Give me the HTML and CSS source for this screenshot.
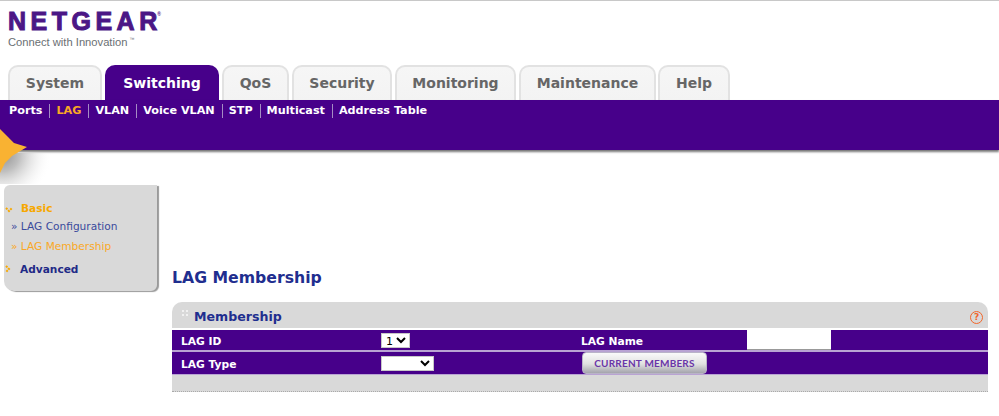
FILE: index.html
```html
<!DOCTYPE html>
<html lang="en">
<head>
<meta charset="utf-8">
<title>LAG Membership</title>
<link rel="stylesheet" href="styles.css">
</head>
<body>
<header class="top">
  <div class="logo">
    <div class="logo-name">NETGEA<span class="logo-last">R</span><span class="logo-reg">®</span></div>
    <div class="logo-tag">Connect with Innovation<sup class="tm">™</sup></div>
  </div>
  <nav class="tabs">
    <a class="tab tab-system">System</a>
    <a class="tab tab-on tab-switching">Switching</a>
    <a class="tab tab-qos">QoS</a>
    <a class="tab tab-security">Security</a>
    <a class="tab tab-monitoring">Monitoring</a>
    <a class="tab tab-maintenance">Maintenance</a>
    <a class="tab tab-help">Help</a>
  </nav>
</header>
<div class="band">
  <nav class="subnav">
    <a>Ports</a><a class="sub-on">LAG</a><a>VLAN</a><a>Voice VLAN</a><a>STP</a><a>Multicast</a><a>Address Table</a>
  </nav>
</div>
<div class="star-wrap">
  <svg class="star" width="60" height="34" viewBox="0 0 60 34">
    <defs>
      <radialGradient id="glow" gradientUnits="userSpaceOnUse" cx="2" cy="4" r="50">
        <stop offset="0" stop-color="#8c8c8c"/>
        <stop offset="0.35" stop-color="#b8b8b8" stop-opacity="0.9"/>
        <stop offset="1" stop-color="#ffffff" stop-opacity="0"/>
      </radialGradient>
      <filter id="soft"><feGaussianBlur stdDeviation="0.6"/></filter>
    </defs>
    <rect x="0" y="3" width="60" height="31" fill="url(#glow)"/>
    <path d="M0 -21 L8 -13 L14 -7 L27 -3 L12 6 L5 13 L0 23 Z" fill="#f9b233" filter="url(#soft)"/>
  </svg>
</div>
<div class="main">
  <aside class="side">
    <div class="side-head side-open"><svg class="chev" width="8" height="6" viewBox="0 0 8 6"><path d="M1 1 L4 4 L7 1" fill="none" stroke="#f7a800" stroke-width="2" stroke-dasharray="2 1"/></svg>Basic</div>
    <a class="side-link">» LAG Configuration</a>
    <a class="side-link side-link-on">» LAG Membership</a>
    <div class="side-head side-closed"><svg class="chev-r" width="6" height="8" viewBox="0 0 6 8"><path d="M1 1 L4 4 L1 7" fill="none" stroke="#f7a800" stroke-width="2" stroke-dasharray="2 1"/></svg>Advanced</div>
  </aside>
  <section class="content">
    <h1 class="title">LAG Membership</h1>
    <div class="panel">
      <div class="panel-head">
        <span class="grip">
          <i></i><i></i><i></i><i></i>
        </span>
        <span class="panel-title">Membership</span>
        <span class="help">?</span>
      </div>
      <div class="row row-first">
        <label class="c1">LAG ID</label>
        <div class="c2"><select class="sel sel-id"><option>1</option></select></div>
        <label class="c3">LAG Name</label>
        <div class="c4"><input class="name-input" type="text"></div>
      </div>
      <div class="row">
        <label class="c1">LAG Type</label>
        <div class="c2"><select class="sel sel-type"><option></option></select></div>
        <div class="c3"><button class="btn" type="button">CURRENT MEMBERS</button></div>
      </div>
      <div class="panel-foot"></div>
    </div>
  </section>
</div>
</body>
</html>
```
FILE: styles.css
```css
* { box-sizing: border-box; }
html, body { margin: 0; padding: 0; background: #fff; overflow: hidden; }
body { font-family: "DejaVu Sans", sans-serif; width: 999px; height: 416px; border-top: 1px solid #c8c8c8; }

.top { height: 99px; padding-left: 8px; display: flex; flex-direction: column; }
.logo { height: 64px; padding-top: 8px; }
.logo-name { font-family: "Liberation Sans", sans-serif; font-weight: 700; font-size: 25px; line-height: 25px; letter-spacing: 4.5px; color: #4b1786; -webkit-text-stroke: 1px #4b1786; white-space: nowrap; }
.logo-last { letter-spacing: 0; }
.logo-reg { font-size: 5px; line-height: 0; vertical-align: 14px; letter-spacing: 0; -webkit-text-stroke: 0; }
.logo-tag { font-family: "Liberation Sans", sans-serif; font-size: 11.2px; line-height: 14px; margin-top: 1px; color: #6a6f73; white-space: nowrap; }
.tm { font-size: 5px; line-height: 0; margin-left: 2px; }

.tabs { display: flex; height: 35px; }
.tab { display: flex; align-items: center; justify-content: center; font-size: 14px; font-weight: 700; color: #666; background: linear-gradient(#f6f6f6, #f3f3f3); border: 2px solid #e2e2e2; border-bottom: 0; border-radius: 10px 10px 0 0; height: 35px; padding-bottom: 1px; }
.tab-system { width: 94px; margin-right: 3px; }
.tab-switching { width: 114px; margin-right: 3px; }
.tab-qos { width: 67px; margin-right: 3px; }
.tab-security { width: 100px; margin-right: 3px; }
.tab-monitoring { width: 121px; margin-right: 3px; }
.tab-maintenance { width: 137px; margin-right: 2px; }
.tab-help { width: 72px; }
.tab-on { background: #47008a; border-color: #47008a; color: #fff; }

.band { height: 50px; background: #47008a; box-shadow: 0 2px 2px #777; position: relative; z-index: 2; }
.subnav { display: flex; align-items: center; height: 21px; padding-left: 9px; font-size: 11.2px; font-weight: 700; color: #fff; }
.subnav a { padding-right: 7px; margin-right: 6px; border-right: 1px solid #a58cc4; line-height: 14px; white-space: nowrap; }
.subnav a:last-child { border-right: 0; }
.subnav .sub-on { color: #f9a825; }

.star-wrap { position: relative; height: 0; z-index: 3; }
.star { position: absolute; left: 0; top: 0; overflow: visible; }

.main { display: flex; padding: 35px 0 0 4px; }
.side { width: 153px; height: 106px; background: #d9d9d9; border-radius: 6px 0 6px 10px; box-shadow: 2px 1px 1px #9a9a9a; position: relative; padding-top: 16px; font-size: 10.6px; flex: none; }
.side-head { font-weight: 700; line-height: 14px; display: flex; align-items: center; }
.side-open { color: #f7a800; padding-left: 1px; }
.side-closed { color: #1f2a87; margin-top: 9px; }
.chev { margin-right: 8px; margin-top: 4px; flex: none; }
.chev-r { margin-right: 9px; margin-left: 1px; flex: none; }
.side-link { display: block; padding-left: 7px; color: #3a4a9c; line-height: 14px; margin-top: 4px; white-space: nowrap; }
.side-link + .side-link { margin-top: 6px; }
.side-link-on { color: #f9a825; }

.content { margin-left: 15px; width: 816px; padding-top: 82px; }
.title { margin: 0; font-size: 15.7px; line-height: 22px; font-weight: 700; color: #1f2e8f; }
.panel { margin-top: 13px; background: #d9d9d9; border-radius: 10px 10px 0 0; border-bottom: 1px dotted #aaa; }
.panel-head { height: 26px; position: relative; display: flex; align-items: center; padding-left: 10px; }
.grip { display: grid; grid-template-columns: 2px 2px; gap: 2px; margin-right: 6px; margin-top: -4px; }
.grip i { display: block; width: 2px; height: 2px; background: #f1f1f1; }
.panel-title { font-size: 12.6px; font-weight: 700; color: #1f2e8f; padding-top: 2px; }
.help { position: absolute; right: 5px; top: 9px; width: 13px; height: 13px; border: 1.5px solid #f2672a; border-radius: 50%; color: #f2672a; font-size: 9px; font-weight: 700; line-height: 10px; text-align: center; }
.row { display: flex; align-items: center; height: 24px; background: #47008a; border-top: 2px solid #b9a3d3; font-size: 10.7px; font-weight: 700; color: #fff; }
.row-first { border-top: 2px solid #fff; height: 22px; }
.c1 { width: 209px; padding-left: 9px; padding-top: 2px; }
.c2 { width: 200px; display: flex; }
.c3 { width: 166px; display: flex; }
label.c3 { padding-top: 2px; }
.c4 { display: flex; }
.sel { font-family: "DejaVu Sans", sans-serif; font-size: 11px; height: 15px; background: #fff; border: 1px solid #c8c8c8; padding: 0; margin: 0; border-radius: 0; }
.sel-id { width: 29px; }
.sel-type { width: 53px; }
.name-input { width: 84px; height: 20px; border: 0; border-bottom: 1px solid #999; background: #fff; padding: 0; display: block; }
.btn { width: 125px; height: 22px; margin-left: 1px; border: 1px solid #b9b3c8; border-radius: 4px; background: linear-gradient(#fafafa, #e0e0e0 55%, #a4a4ac); font-family: "Lato", sans-serif; font-size: 10px; font-weight: 700; letter-spacing: 0.2px; color: #6a35a8; padding: 0; white-space: nowrap; }
.panel-foot { height: 17px; border-top: 1px solid #b9a3d3; }
```
